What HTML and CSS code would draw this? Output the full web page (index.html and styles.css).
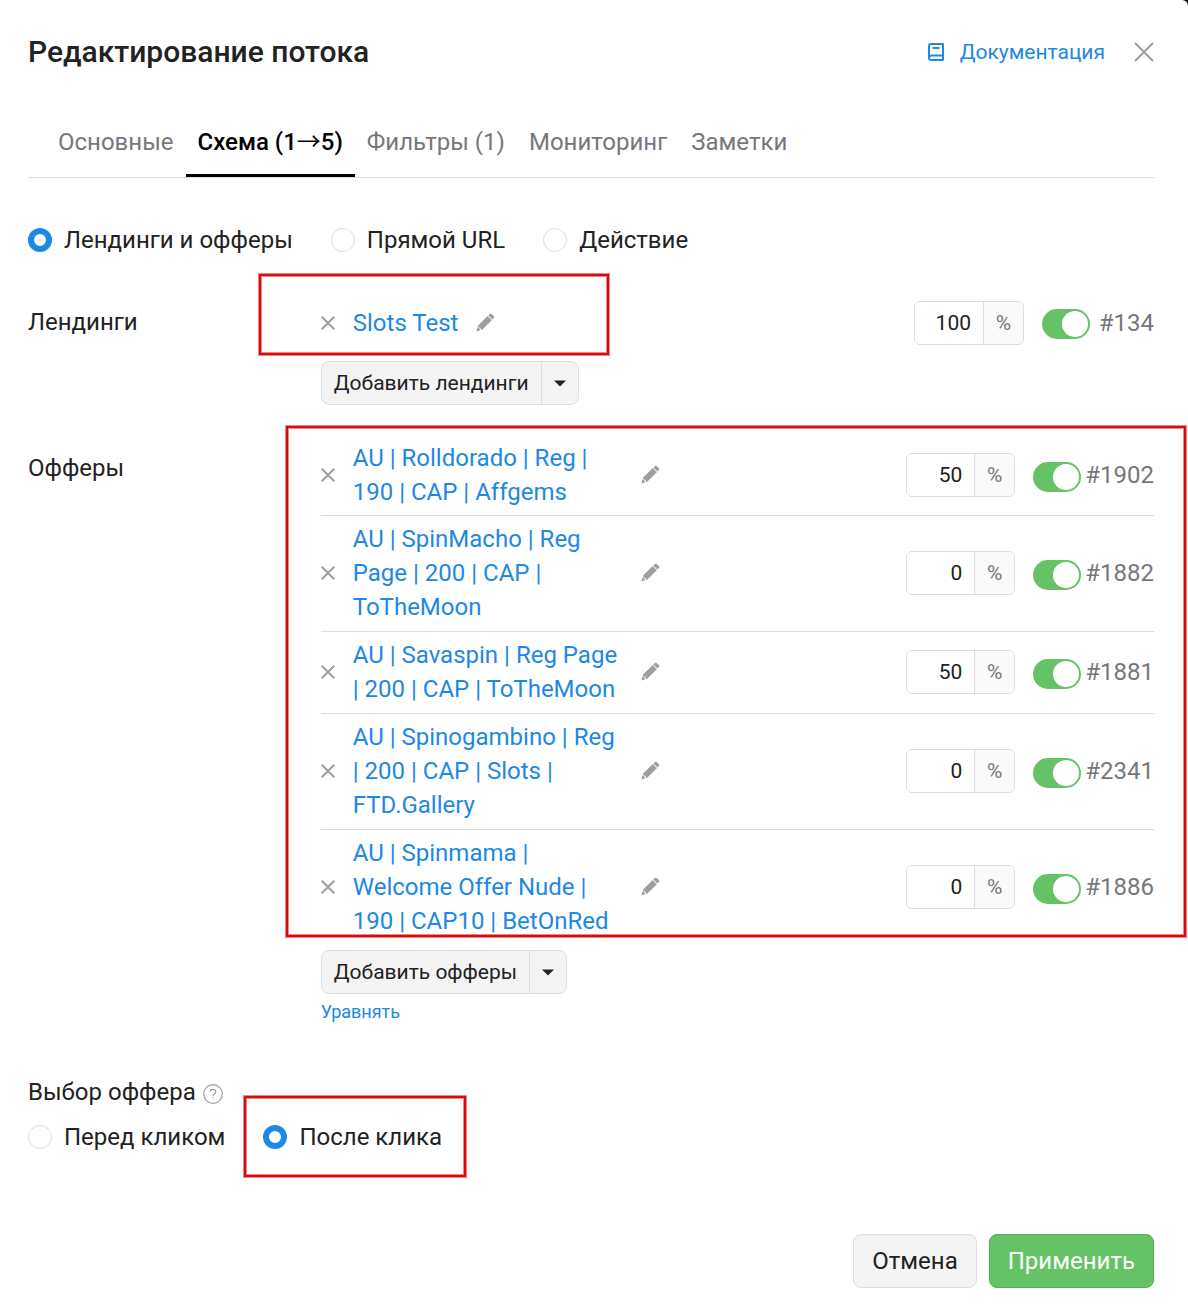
FILE: index.html
```html
<!DOCTYPE html>
<html lang="ru">
<head>
<meta charset="utf-8">
<meta name="viewport" content="width=device-width, initial-scale=1">
<title>Редактирование потока</title>
<link rel="stylesheet" href="styles.css">
</head>
<body>
<svg class="sprite" aria-hidden="true">
  <symbol id="i-remove" viewBox="0 0 14 14"><path d="M.7.7 13.3 13.3M13.3.7.7 13.3" fill="none" stroke="currentColor" stroke-width="2"/></symbol>
  <symbol id="i-edit" viewBox="0 0 20 20"><path d="M2.1 12.6 11.7 3.1 15.8 7.2 6.2 16.7 5.2 16.9 4.6 15 2.3 14.3zM1.5 14.2 3.2 15.1 4.2 17.2 .4 18.6zM12.3 2.5 14 .9Q14.8.2 15.6.9L18 3.2Q18.8 4 18 4.8L16.4 6.6z" fill="currentColor"/></symbol>
  <symbol id="i-caret" viewBox="0 0 12 7"><path d="M0 .4H12L6 6.4z" fill="currentColor"/></symbol>
</svg>
<main class="dialog">
  <header class="header">
    <h1 class="title">Редактирование потока</h1>
    <a class="docs" href="#docs">
      <svg class="docs-icon" viewBox="0 0 16 18" aria-hidden="true"><path d="M3.4 1H15V17H3.4Q1 17 1 14.7V3.3Q1 1 3.4 1zM1.2 14.4Q1.6 12.6 3.4 12.6H15M4.6 5H11.4" fill="none" stroke="currentColor" stroke-width="2" stroke-linejoin="round"/></svg>
      Документация
    </a>
    <button class="icon-button close" type="button" aria-label="Закрыть">
      <svg viewBox="0 0 20 20"><path d="M1 1 19 19M19 1 1 19" fill="none" stroke="currentColor" stroke-width="2"/></svg>
    </button>
  </header>

  <nav class="tabs">
    <a class="tab" href="#main">Основные</a>
    <a class="tab active" href="#schema" aria-current="page">Схема (1<span class="arrow">→</span>5)</a>
    <a class="tab" href="#filters">Фильтры (1)</a>
    <a class="tab" href="#monitoring">Мониторинг</a>
    <a class="tab" href="#notes">Заметки</a>
  </nav>

  <form class="form">
    <div class="radios schema-type">
      <label class="radio"><input type="radio" name="schema" checked>Лендинги и офферы</label>
      <label class="radio"><input type="radio" name="schema">Прямой URL</label>
      <label class="radio"><input type="radio" name="schema">Действие</label>
    </div>

    <section class="section landings">
      <h2 class="label">Лендинги</h2>
      <div class="content">
        <ul class="items">
          <li class="item">
            <button class="icon-button remove" type="button" aria-label="Удалить"><svg><use href="#i-remove"/></svg></button>
            <a class="name" href="#134">Slots Test</a>
            <button class="icon-button edit" type="button" aria-label="Изменить"><svg><use href="#i-edit"/></svg></button>
            <span class="share"><input type="text" inputmode="numeric" value="100" aria-label="Доля"><span class="unit">%</span></span>
            <input class="switch" type="checkbox" role="switch" aria-label="Включён" checked>
            <span class="id">#134</span>
          </li>
        </ul>
        <div class="split">
          <button class="split-main" type="button">Добавить лендинги</button>
          <button class="split-caret" type="button" aria-label="Ещё"><svg><use href="#i-caret"/></svg></button>
        </div>
        <div class="mark mark-landing"></div>
      </div>
    </section>

    <section class="section offers">
      <h2 class="label">Офферы</h2>
      <div class="content">
        <ul class="items">
          <li class="item">
            <button class="icon-button remove" type="button" aria-label="Удалить"><svg><use href="#i-remove"/></svg></button>
            <a class="name" href="#1902">AU | Rolldorado | Reg | 190 | CAP | Affgems</a>
            <button class="icon-button edit" type="button" aria-label="Изменить"><svg><use href="#i-edit"/></svg></button>
            <span class="share"><input type="text" inputmode="numeric" value="50" aria-label="Доля"><span class="unit">%</span></span>
            <input class="switch" type="checkbox" role="switch" aria-label="Включён" checked>
            <span class="id">#1902</span>
          </li>
          <li class="item">
            <button class="icon-button remove" type="button" aria-label="Удалить"><svg><use href="#i-remove"/></svg></button>
            <a class="name" href="#1882">AU | SpinMacho | Reg Page | 200 | CAP | ToTheMoon</a>
            <button class="icon-button edit" type="button" aria-label="Изменить"><svg><use href="#i-edit"/></svg></button>
            <span class="share"><input type="text" inputmode="numeric" value="0" aria-label="Доля"><span class="unit">%</span></span>
            <input class="switch" type="checkbox" role="switch" aria-label="Включён" checked>
            <span class="id">#1882</span>
          </li>
          <li class="item">
            <button class="icon-button remove" type="button" aria-label="Удалить"><svg><use href="#i-remove"/></svg></button>
            <a class="name" href="#1881">AU | Savaspin | Reg Page | 200 | CAP | ToTheMoon</a>
            <button class="icon-button edit" type="button" aria-label="Изменить"><svg><use href="#i-edit"/></svg></button>
            <span class="share"><input type="text" inputmode="numeric" value="50" aria-label="Доля"><span class="unit">%</span></span>
            <input class="switch" type="checkbox" role="switch" aria-label="Включён" checked>
            <span class="id">#1881</span>
          </li>
          <li class="item">
            <button class="icon-button remove" type="button" aria-label="Удалить"><svg><use href="#i-remove"/></svg></button>
            <a class="name" href="#2341">AU | Spinogambino | Reg | 200 | CAP | Slots | FTD.Gallery</a>
            <button class="icon-button edit" type="button" aria-label="Изменить"><svg><use href="#i-edit"/></svg></button>
            <span class="share"><input type="text" inputmode="numeric" value="0" aria-label="Доля"><span class="unit">%</span></span>
            <input class="switch" type="checkbox" role="switch" aria-label="Включён" checked>
            <span class="id">#2341</span>
          </li>
          <li class="item">
            <button class="icon-button remove" type="button" aria-label="Удалить"><svg><use href="#i-remove"/></svg></button>
            <a class="name" href="#1886">AU | Spinmama | Welcome Offer Nude | 190 | CAP10 | BetOnRed</a>
            <button class="icon-button edit" type="button" aria-label="Изменить"><svg><use href="#i-edit"/></svg></button>
            <span class="share"><input type="text" inputmode="numeric" value="0" aria-label="Доля"><span class="unit">%</span></span>
            <input class="switch" type="checkbox" role="switch" aria-label="Включён" checked>
            <span class="id">#1886</span>
          </li>
        </ul>
        <div class="split">
          <button class="split-main" type="button">Добавить офферы</button>
          <button class="split-caret" type="button" aria-label="Ещё"><svg><use href="#i-caret"/></svg></button>
        </div>
        <a class="equalize" href="#equalize">Уравнять</a>
        <div class="mark mark-offers"></div>
      </div>
    </section>

    <section class="choice">
      <h2 class="choice-title">Выбор оффера
        <svg class="help" viewBox="0 0 20 20" aria-hidden="true"><circle cx="10" cy="10" r="9.3" fill="none" stroke="currentColor" stroke-width="1.2"/><path d="M7.2 8Q7.2 5.4 10 5.4T12.8 7.8Q12.8 9 11.4 10T10 12.2M10 13.4V14.8" fill="none" stroke="currentColor" stroke-width="1.1"/></svg>
      </h2>
      <div class="radios">
        <label class="radio"><input type="radio" name="moment">Перед кликом</label>
        <label class="radio marked"><input type="radio" name="moment" checked>После клика<span class="mark mark-choice"></span></label>
      </div>
    </section>

    <footer class="footer">
      <button class="button" type="button">Отмена</button>
      <button class="button primary" type="submit">Применить</button>
    </footer>
  </form>
</main>
</body>
</html>
```

FILE: styles.css
```css
* {
  box-sizing: border-box;
}

body {
  margin: 0;
  background: #111;
  color: #222;
  font: 24px/34px Roboto, "Liberation Sans", sans-serif;
}

a {
  color: #1e88e5;
  text-decoration: none;
}

button,
input {
  margin: 0;
  color: inherit;
  font: inherit;
}

button {
  cursor: pointer;
}

h1,
h2,
ul {
  margin: 0;
  padding: 0;
  font: inherit;
  list-style: none;
}

.sprite {
  display: none;
}

.dialog {
  min-height: 100vh;
  padding: 28px 34px 26px 28px;
  background: #fff;
  border-radius: 0 6px 0 0;
}

.header {
  display: flex;
  align-items: center;
}

.title {
  flex: 1;
  font-size: 30px;
  font-weight: 500;
  line-height: 48px;
}

.docs {
  display: flex;
  align-items: center;
  gap: 16px;
  font-size: 21px;
}

.docs-icon {
  width: 16px;
  height: 18px;
}

.icon-button {
  display: flex;
  flex: none;
  padding: 0;
  border: 0;
  background: none;
  color: #9e9e9e;
}

.close {
  width: 20px;
  height: 20px;
  margin-left: 29px;
}

.tabs {
  display: flex;
  margin-top: 34px;
  padding: 0 18px;
  border-bottom: 1px solid #ddd;
}

.tab {
  padding: 15px 12px;
  border-bottom: 3px solid transparent;
  color: #75787b;
}

.tab.active {
  border-color: #000;
  color: #000;
  font-weight: 500;
}

.arrow {
  font-family: "Noto Sans CJK SC", sans-serif;
  font-weight: 400;
  line-height: 24px;
}

.radios {
  display: flex;
  gap: 38px;
}

.schema-type {
  margin-top: 45px;
}

.radio {
  display: flex;
  align-items: center;
  gap: 12px;
}

.radio input {
  width: 24px;
  height: 24px;
  appearance: none;
  border: 1px solid #ddd;
  border-radius: 50%;
  background: #fff;
}

.radio input:checked {
  border: 6px solid #1e88e5;
}

.section {
  display: grid;
  grid-template-columns: 26fr 74fr;
  margin-top: 29px;
}

.label {
  padding-top: 17px;
}

.content {
  position: relative;
}

.item {
  display: flex;
  align-items: center;
  padding: 6px 0 7px;
  border-bottom: 1px solid #ddd;
}

.item:first-child {
  padding: 7px 0 6px;
}

.item:last-child {
  border-bottom: 0;
}

.landings {
  margin-top: 31px;
}

.landings .item {
  padding: 13px 0 16px;
}

.remove {
  width: 14px;
  height: 14px;
  margin-right: 18px;
}

.name {
  max-width: 270px;
}

.offers .name {
  width: 270px;
}

.edit {
  width: 20px;
  height: 20px;
  margin-left: 18px;
}

.icon-button svg {
  width: 100%;
  height: 100%;
}

.share {
  display: flex;
  width: 110px;
  height: 44px;
  margin-left: auto;
  border: 1px solid #ddd;
  border-radius: 6px;
  overflow: hidden;
  font-size: 21px;
}

.offers .share {
  width: 109px;
}

.share input {
  flex: 1;
  min-width: 0;
  padding: 0 12px;
  border: 0;
  background: #fff;
  text-align: right;
}

.unit {
  width: 40px;
  border-left: 1px solid #ddd;
  background: #fafafa;
  color: #75787b;
  line-height: 42px;
  text-align: center;
}

.switch {
  display: flex;
  width: 48px;
  height: 30px;
  margin: 2px 4px 0 18px;
  padding: 2px;
  appearance: none;
  border-radius: 15px;
  background: #bbb;
}

.offers .switch {
  margin-top: 4px;
}

.switch::before {
  width: 26px;
  height: 26px;
  border-radius: 50%;
  background: #fff;
  content: "";
}

.switch:checked {
  justify-content: flex-end;
  background: #66c266;
}

.id {
  min-width: 60px;
  color: #75787b;
  text-align: right;
}

.split {
  display: flex;
  width: max-content;
  height: 44px;
  border: 1px solid #ddd;
  border-radius: 8px;
  background: #f4f4f4;
  font-size: 21px;
}

.split button {
  padding: 0 12px;
  border: 0;
  background: none;
}

.split .split-caret {
  display: flex;
  align-items: center;
  border-left: 1px solid #ddd;
}

.split-caret svg {
  width: 12px;
  height: 7px;
}

.offers .split {
  margin-top: 5px;
}

.equalize {
  display: block;
  width: max-content;
  margin-top: 6px;
  font-size: 18px;
  line-height: 24px;
}

.mark {
  position: absolute;
  border: 2px solid #d90b0b;
  box-shadow: 0 0 0 1px #d90b0b80, inset 0 0 0 1px #d90b0b80;
  pointer-events: none;
}

.mark-landing {
  top: -14px;
  left: -62px;
  width: 350px;
  height: 81px;
}

.mark-offers {
  top: -8px;
  right: -32px;
  bottom: 87px;
  left: -35px;
}

.choice {
  margin-top: 51px;
}

.choice-title {
  display: flex;
  align-items: center;
  gap: 7px;
  margin-bottom: 11px;
}

.help {
  width: 20px;
  height: 20px;
  margin-top: 4px;
  color: #9e9e9e;
}

.marked {
  position: relative;
}

.mark-choice {
  inset: -24px -24px -23px -19px;
}

.footer {
  display: flex;
  justify-content: flex-end;
  gap: 12px;
  margin-top: 80px;
}

.button {
  height: 54px;
  padding: 0 18px;
  border: 1px solid #ddd;
  border-radius: 8px;
  background: #f4f4f4;
}

.primary {
  border-color: #4caf50;
  background: #66c266;
  color: #fff;
}
```
